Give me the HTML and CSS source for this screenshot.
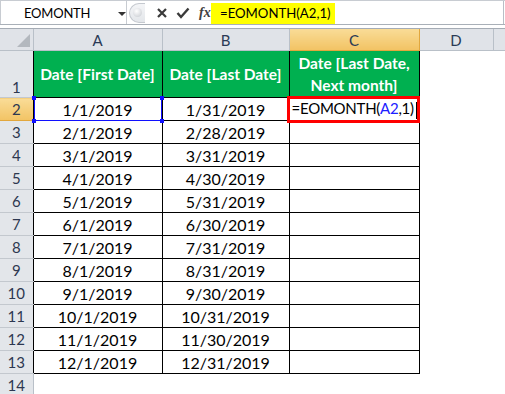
FILE: index.html
```html
<!DOCTYPE html>
<html>
<head>
<meta charset="utf-8">
<link rel="stylesheet" href="styles.css">
</head>
<body>
<div class="app">
  <div class="fbar">
    <div class="namebox">
      <span class="name">EOMONTH</span>
      <span class="caret"></span>
    </div>
    <div class="grip"><span class="grip-dot"></span></div>
    <div class="btns">
      <svg class="ico" width="12" height="12" viewBox="0 0 12 12"><path d="M2 2 L10 10 M10 2 L2 10" stroke="#3a3a3a" stroke-width="2.2" fill="none"/></svg>
      <svg class="ico" width="14" height="12" viewBox="0 0 14 12"><path d="M1.5 6 L5 10 L12.5 1.5" stroke="#3a3a3a" stroke-width="2.4" fill="none"/></svg>
      <span class="fx">fx</span>
    </div>
    <div class="formula"><span class="hl">=EOMONTH(A2,1)</span></div>
  </div>
  <div class="gap"></div>
  <table class="sheet">
    <colgroup>
      <col class="c-rh"><col class="c-a"><col class="c-b"><col class="c-c"><col class="c-d"><col class="c-e">
    </colgroup>
    <tr class="r-head">
      <td class="corner"><span class="tri"></span></td>
      <td class="ch">A</td><td class="ch">B</td><td class="ch sel">C</td><td class="ch">D</td><td class="ch"></td>
    </tr>
    <tr class="r-1">
      <td class="rh rh-bottom">1</td>
      <td class="hd">Date [First Date]</td>
      <td class="hd">Date [Last Date]</td>
      <td class="hd">Date [Last Date,<br>Next month]</td>
      <td class="blank"></td><td class="blank"></td>
    </tr>
    <tr>
      <td class="rh sel">2</td>
      <td class="dt active">1/1/2019<span class="hnd h-tl"></span><span class="hnd h-tr"></span><span class="hnd h-bl"></span><span class="hnd h-br"></span></td>
      <td class="dt">1/31/2019</td>
      <td class="dt edit">=EOMONTH(<span class="ref">A2</span>,1)<span class="cur"></span><span class="redbox"></span></td>
      <td class="blank"></td><td class="blank"></td>
    </tr>
    <tr><td class="rh">3</td><td class="dt">2/1/2019</td><td class="dt">2/28/2019</td><td class="dt"></td><td class="blank"></td><td class="blank"></td></tr>
    <tr><td class="rh">4</td><td class="dt">3/1/2019</td><td class="dt">3/31/2019</td><td class="dt"></td><td class="blank"></td><td class="blank"></td></tr>
    <tr><td class="rh">5</td><td class="dt">4/1/2019</td><td class="dt">4/30/2019</td><td class="dt"></td><td class="blank"></td><td class="blank"></td></tr>
    <tr><td class="rh">6</td><td class="dt">5/1/2019</td><td class="dt">5/31/2019</td><td class="dt"></td><td class="blank"></td><td class="blank"></td></tr>
    <tr><td class="rh">7</td><td class="dt">6/1/2019</td><td class="dt">6/30/2019</td><td class="dt"></td><td class="blank"></td><td class="blank"></td></tr>
    <tr><td class="rh">8</td><td class="dt">7/1/2019</td><td class="dt">7/31/2019</td><td class="dt"></td><td class="blank"></td><td class="blank"></td></tr>
    <tr><td class="rh">9</td><td class="dt">8/1/2019</td><td class="dt">8/31/2019</td><td class="dt"></td><td class="blank"></td><td class="blank"></td></tr>
    <tr><td class="rh">10</td><td class="dt">9/1/2019</td><td class="dt">9/30/2019</td><td class="dt"></td><td class="blank"></td><td class="blank"></td></tr>
    <tr><td class="rh">11</td><td class="dt">10/1/2019</td><td class="dt">10/31/2019</td><td class="dt"></td><td class="blank"></td><td class="blank"></td></tr>
    <tr><td class="rh">12</td><td class="dt">11/1/2019</td><td class="dt">11/30/2019</td><td class="dt"></td><td class="blank"></td><td class="blank"></td></tr>
    <tr><td class="rh">13</td><td class="dt">12/1/2019</td><td class="dt">12/31/2019</td><td class="dt"></td><td class="blank"></td><td class="blank"></td></tr>
    <tr class="r-last"><td class="rh rh-plain">14</td><td class="blank"></td><td class="blank"></td><td class="blank"></td><td class="blank"></td><td class="blank"></td></tr>
  </table>
</div>
</body>
</html>
```
FILE: styles.css
```css
html, body {
  margin: 0;
  padding: 0;
  background: #ffffff;
}
.app {
  width: 505px;
  height: 394px;
  overflow: hidden;
  font-family: Lato, "Liberation Sans", sans-serif;
}
.fbar {
  display: flex;
  align-items: stretch;
  height: 23px;
  border-top: 1px solid #c8ccd2;
  border-bottom: 1px solid #a9b0b8;
  background: #ffffff;
}
.namebox {
  width: 127px;
  display: flex;
  align-items: center;
  position: relative;
  border-left: 1px solid #c8ccd2;
  border-right: 1px solid #c8ccd2;
  box-sizing: border-box;
}
.name {
  margin-left: 23px;
  font-size: 13px;
  color: #000;
  letter-spacing: -0.2px;
}
.caret {
  position: absolute;
  left: 117px;
  top: 11px;
  width: 0;
  height: 0;
  border-left: 4px solid transparent;
  border-right: 4px solid transparent;
  border-top: 4px solid #333;
}
.grip {
  width: 16px;
  margin-left: 2px;
  margin-top: 2px;
  height: 20px;
  border: 1px solid #c5c9cf;
  border-right: none;
  border-radius: 10px 0 0 10px;
  background: linear-gradient(#f4f5f7, #e3e6ea);
  position: relative;
  box-sizing: border-box;
}
.grip-dot {
  position: absolute;
  left: 3px;
  top: 4px;
  width: 9px;
  height: 9px;
  border-radius: 50%;
  background: radial-gradient(circle at 40% 35%, #ffffff, #c4c8ce);
}
.btns {
  width: 66px;
  display: flex;
  align-items: center;
  gap: 8px;
  padding-left: 11px;
  box-sizing: border-box;
}
.ico { display: block; }
.fx {
  font-family: "Liberation Serif", serif;
  font-style: italic;
  font-weight: bold;
  font-size: 14px;
  color: #404040;
  margin-left: 1px;
}
.formula {
  flex: 1;
  display: flex;
  align-items: flex-end;
  border-right: 1px solid #b8bec6;
  margin-right: 1px;
}
.hl {
  background: #ffff00;
  height: 21px;
  line-height: 21px;
  width: 124px;
  box-sizing: border-box;
  padding-left: 9px;
  font-size: 13.2px;
  color: #000;
}
.gap {
  height: 3px;
  border-bottom: 1px solid #a5acb5;
  background: #ffffff;
}
.sheet {
  table-layout: fixed;
  border-collapse: collapse;
  width: 505px;
}
.c-rh { width: 33px; }
.c-a { width: 129px; }
.c-b { width: 127px; }
.c-c { width: 130px; }
.c-d { width: 74px; }
.c-e { width: 12px; }
.sheet td {
  padding: 0;
  overflow: hidden;
  white-space: nowrap;
  vertical-align: middle;
  text-align: center;
}
.r-head td {
  height: 21px;
  background: #e0e3e8;
  border-right: 1px solid #b9c0c8;
  border-bottom: 1px solid #b9c0c8;
  font-size: 15px;
  color: #2a3a55;
}
.corner { position: relative; background: #dfe2e6; }
.tri {
  position: absolute;
  right: 3px;
  bottom: 3px;
  width: 0;
  height: 0;
  border-left: 13px solid transparent;
  border-bottom: 13px solid #b3b8be;
}
.r-head td.sel {
  background: linear-gradient(#f9dc97, #f2c364);
  border-right: 1px solid #e2a73d;
  border-bottom: 1px solid #e2a73d;
}
.rh {
  background: #e3e6ea;
  border-right: 1px solid #000;
  border-bottom: 1px solid #c3c8ce;
  font-size: 15px;
  color: #2d3850;
  height: 22px;
}
.rh.sel {
  background: linear-gradient(#f9dc97, #f2c364);
  border-bottom: 1px solid #e2a73d;
}
.rh-bottom { vertical-align: bottom !important; padding-bottom: 1px !important; height: 45px; }
.rh-plain { border-right: 1px solid #b9c0c8; border-bottom: none; }
.hd {
  background: #00b050;
  border: 1px solid #000;
  color: #ffffff;
  font-weight: bold;
  font-size: 15.5px;
  line-height: 22px;
}
.dt {
  border: 1px solid #000;
  font-size: 16px;
  color: #000;
  background: #fff;
}
.blank { background: #fff; }
.sheet td.active { position: relative; overflow: visible; }
.active::after {
  content: "";
  position: absolute;
  left: 0;
  top: 0;
  right: 0;
  bottom: -1px;
  border: 1px solid #1010ff;
  border-top: none;
  pointer-events: none;
}
.hnd {
  position: absolute;
  width: 4px;
  height: 4px;
  background: #1010ff;
}
.h-tl { left: -2px; top: -2px; }
.h-tr { right: -2px; top: -2px; }
.h-bl { left: -2px; bottom: -3px; }
.h-br { right: -2px; bottom: -3px; }
.sheet td.edit {
  position: relative;
  overflow: visible;
  text-align: left;
  padding-left: 2px;
  font-size: 15px;
  letter-spacing: -0.25px;
}
.ref { color: #2020ff; }
.cur {
  display: inline-block;
  width: 1px;
  height: 17px;
  background: #000;
  vertical-align: middle;
  margin-left: 2px;
}
.redbox {
  position: absolute;
  left: -3px;
  top: -2px;
  right: -1px;
  bottom: -3px;
  border: 3px solid #ff0000;
  pointer-events: none;
}
.r-last td { height: 21px; }
```
